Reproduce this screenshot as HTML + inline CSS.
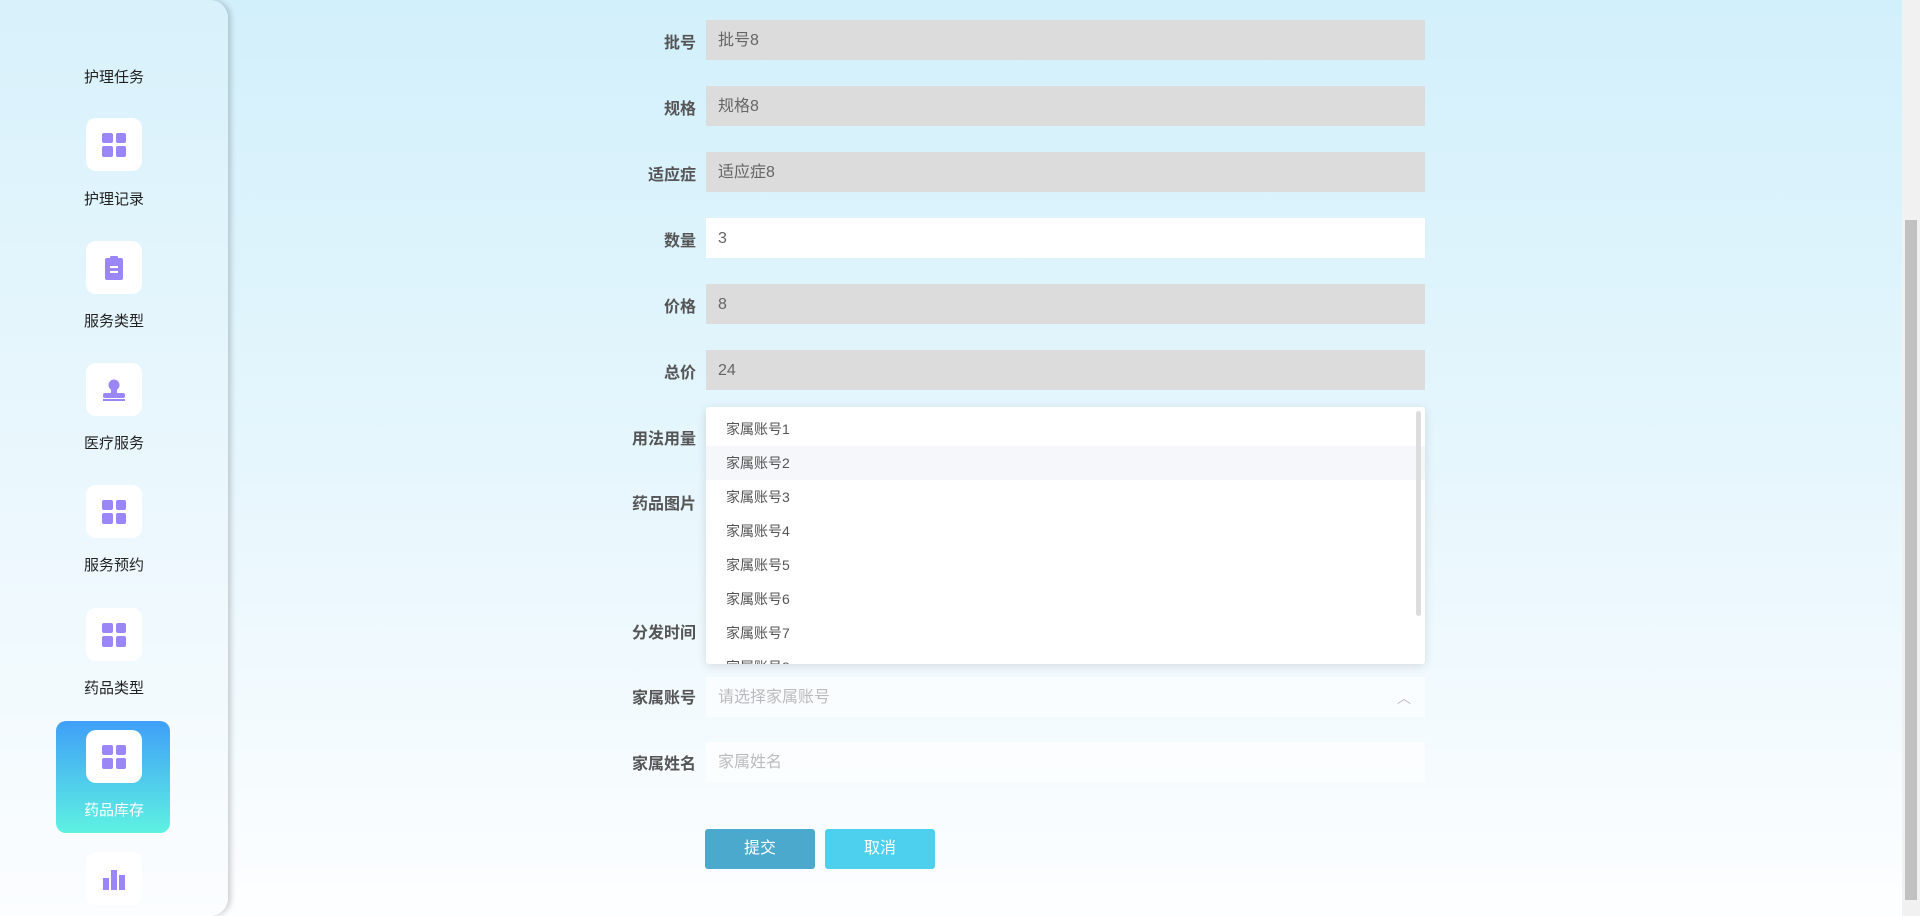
<!DOCTYPE html>
<html><head><meta charset="utf-8"><style>
*{box-sizing:border-box;margin:0;padding:0}
body{width:1920px;height:916px;overflow:hidden;position:relative;font-family:"Liberation Sans","Noto Sans CJK SC",sans-serif;background:linear-gradient(180deg,#d2f0fb 0%,#e6f6fd 50%,#fdfeff 100%)}
.side{position:absolute;left:0;top:0;width:228px;height:916px;border-radius:0 18px 18px 0;background:linear-gradient(180deg,#d8f1fb,#fbfdff);box-shadow:3px 0 6px rgba(0,0,0,.18)}
.ic{position:absolute;left:86px;width:56px;height:53px;background:#fff;border-radius:10px;display:flex;align-items:center;justify-content:center}
.lb{position:absolute;left:0;width:228px;text-align:center;font-size:15px;color:#222}
.act{position:absolute;left:56px;top:721px;width:114px;height:112px;border-radius:10px;background:linear-gradient(180deg,#3f9ff8,#5ef2e2)}
.grid{width:24px;height:24px;display:grid;grid-template-columns:1fr 1fr;gap:3px}
.grid i{background:#9a87f5;border-radius:2px}
.l{position:absolute;width:200px;left:496px;text-align:right;font-size:16px;font-weight:bold;color:#555}
.in{position:absolute;left:706px;width:719px;height:40px;background:#dcdcdc;font-size:16px;color:#666;padding-left:12px;line-height:42px}
.dd{position:absolute;left:706px;top:407px;width:719px;height:257px;background:#fff;box-shadow:0 2px 10px rgba(0,0,0,.12);border-radius:3px;overflow:hidden}
.it{height:34px;line-height:35px;padding-left:20px;font-size:14px;color:#555}
.btn{position:absolute;top:829px;width:110px;height:40px;border-radius:3px;color:#fff;font-size:16px;text-align:center;line-height:40px}
</style></head><body>
<div class="side">
<div class="lb" style="top:66px">护理任务</div>
<div class="ic" style="top:118px"><div class="grid"><i></i><i></i><i></i><i></i></div></div>
<div class="lb" style="top:188px">护理记录</div>
<div class="ic" style="top:241px"><svg width="24" height="26" viewBox="0 0 24 26"><rect x="3" y="3" width="18" height="22" rx="2" fill="#9a87f5"/><rect x="8" y="1" width="8" height="4" rx="1" fill="#9a87f5"/><rect x="8" y="11" width="8" height="2" fill="#fff"/><rect x="8" y="16" width="8" height="2" fill="#fff"/></svg></div>
<div class="lb" style="top:310px">服务类型</div>
<div class="ic" style="top:363px"><svg width="26" height="24" viewBox="0 0 26 24"><circle cx="13" cy="7" r="5.5" fill="#9a87f5"/><rect x="10" y="10" width="6" height="6" fill="#9a87f5"/><rect x="2" y="15" width="22" height="5" rx="2" fill="#9a87f5"/><rect x="2" y="21" width="22" height="2" fill="#9a87f5"/></svg></div>
<div class="lb" style="top:432px">医疗服务</div>
<div class="ic" style="top:485px"><div class="grid"><i></i><i></i><i></i><i></i></div></div>
<div class="lb" style="top:554px">服务预约</div>
<div class="ic" style="top:608px"><div class="grid"><i></i><i></i><i></i><i></i></div></div>
<div class="lb" style="top:677px">药品类型</div>
<div class="act"></div>
<div class="ic" style="top:730px"><div class="grid"><i></i><i></i><i></i><i></i></div></div>
<div class="lb" style="top:799px;color:#fff">药品库存</div>
<div class="ic" style="top:852px"><svg width="24" height="22" viewBox="0 0 24 22"><rect x="1" y="10" width="6" height="12" fill="#9a87f5"/><rect x="9" y="2" width="6" height="20" fill="#9a87f5"/><rect x="17" y="7" width="6" height="15" fill="#9a87f5"/></svg></div>
</div>

<div class="l" style="top:29px">批号</div><div class="in" style="top:20px">批号8</div>
<div class="l" style="top:95px">规格</div><div class="in" style="top:86px">规格8</div>
<div class="l" style="top:161px">适应症</div><div class="in" style="top:152px">适应症8</div>
<div class="l" style="top:227px">数量</div><div class="in" style="top:218px;background:#fff">3</div>
<div class="l" style="top:293px">价格</div><div class="in" style="top:284px">8</div>
<div class="l" style="top:359px">总价</div><div class="in" style="top:350px">24</div>
<div class="l" style="top:425px">用法用量</div>
<div class="l" style="top:490px">药品图片</div>
<div class="l" style="top:619px">分发时间</div>
<div class="l" style="top:684px">家属账号</div>
<div class="in" style="top:677px;background:rgba(255,255,255,.6);color:#bbb">请选择家属账号<span style="position:absolute;right:14px;top:0;color:#bbb;font-size:14px">︿</span></div>
<div class="l" style="top:750px">家属姓名</div>
<div class="in" style="top:742px;background:rgba(255,255,255,.6);color:#bbb">家属姓名</div>

<div class="dd">
<div style="height:5px"></div>
<div class="it">家属账号1</div>
<div class="it" style="background:#f5f7fa">家属账号2</div>
<div class="it">家属账号3</div>
<div class="it">家属账号4</div>
<div class="it">家属账号5</div>
<div class="it">家属账号6</div>
<div class="it">家属账号7</div>
<div class="it">家属账号8</div>
<div style="position:absolute;right:4px;top:4px;width:5px;height:205px;border-radius:3px;background:#ddd"></div>
</div>

<div class="btn" style="left:705px;background:#4aa9cc">提交</div>
<div class="btn" style="left:825px;background:#4dcfee">取消</div>

<div style="position:absolute;right:0;top:0;width:18px;height:916px;background:#f1f1f1"></div>
<div style="position:absolute;right:3px;top:220px;width:12px;height:680px;background:#c1c1c1"></div>
</body></html>
